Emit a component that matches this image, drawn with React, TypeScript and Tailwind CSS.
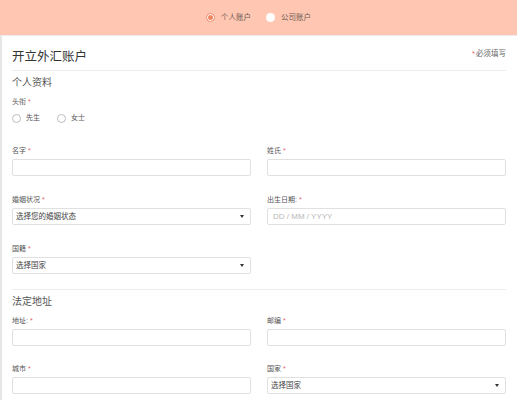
import React from 'react';

interface FieldProps {
  label: string;
  children: React.ReactNode;
}

function Field({ label, children }: FieldProps) {
  return (
    <div>
      <div className="h-[12px] leading-[12px] text-[7px] text-[#555]">
        {label}
        <span className="ml-[2px] text-[#e2646c]">*</span>
      </div>
      <div className="mt-[2px]">{children}</div>
    </div>
  );
}

function TextBox({ placeholder }: { placeholder?: string }) {
  return (
    <div className="h-[17px] rounded-[2px] border border-[#e0e0e0] bg-white px-[5px] flex items-center text-[8px] text-[#b8b8b8]">
      {placeholder}
    </div>
  );
}

function SelectBox({ value }: { value: string }) {
  return (
    <div className="h-[17px] rounded-[2px] border border-[#e0e0e0] bg-white pl-[3px] pr-[6px] flex items-center justify-between text-[7.5px] text-[#444]">
      <span>{value}</span>
      <svg width="4" height="3" viewBox="0 0 4 3">
        <path d="M0 0 L4 0 L2 3 Z" fill="#333" />
      </svg>
    </div>
  );
}

function Radio({ label }: { label: string }) {
  return (
    <div className="flex items-center">
      <span className="w-[9px] h-[9px] rounded-full border border-[#bdbdbd] bg-white" />
      <span className="ml-[5px] text-[7px] text-[#555]">{label}</span>
    </div>
  );
}

export default function App() {
  return (
    <div
      className="w-[517px] h-[400px] overflow-hidden bg-white"
      style={{ fontFamily: '"Liberation Sans", "Noto Sans CJK SC", sans-serif' }}
    >
      {/* Account type switch */}
      <div className="h-[35px] bg-[#ffc7b2] flex items-center justify-center gap-[15px]">
        <label className="flex items-center gap-[6px]">
          <span className="w-[9px] h-[9px] rounded-full border border-[#f08660] bg-white flex items-center justify-center">
            <span className="w-[5px] h-[5px] rounded-full bg-[#f08660]" />
          </span>
          <span className="text-[7.5px] text-[#6e5a54]">个人账户</span>
        </label>
        <label className="flex items-center gap-[6px]">
          <span className="w-[9px] h-[9px] rounded-full bg-white" />
          <span className="text-[7.5px] text-[#6e5a54]">公司账户</span>
        </label>
      </div>

      {/* Form card */}
      <div className="h-[365px] border-t border-[#ececec] border-l-2 border-l-[#e6e6e6] pl-[10px] pr-[11px]">
        <div className="h-[35px] border-b border-[#ececec] flex justify-between">
          <h1 className="mt-[12px] h-[18px] leading-[18px] text-[12.5px] text-[#333]">开立外汇账户</h1>
          <div className="mt-[13px] h-[10px] leading-[10px] text-[7.5px] text-[#666]">
            <span className="text-[#e2646c] mr-[1px]">*</span>必须填写
          </div>
        </div>

        <h2 className="mt-[5px] h-[14px] leading-[14px] text-[10px] text-[#555]">个人资料</h2>

        <div className="mt-[6px] h-[12px] leading-[12px] text-[7px] text-[#555]">
          头衔<span className="ml-[2px] text-[#e2646c]">*</span>
        </div>
        <div className="mt-[4px] h-[12px] flex items-center gap-[17px]">
          <Radio label="先生" />
          <Radio label="女士" />
        </div>

        <div className="mt-[21px] grid grid-cols-2 gap-x-[16px] gap-y-[18px]">
          <Field label="名字">
            <TextBox />
          </Field>
          <Field label="姓氏">
            <TextBox />
          </Field>
          <Field label="婚姻状况">
            <SelectBox value="选择您的婚姻状态" />
          </Field>
          <Field label="出生日期:">
            <TextBox placeholder="DD / MM / YYYY" />
          </Field>
          <Field label="国籍">
            <SelectBox value="选择国家" />
          </Field>
        </div>

        <div className="mt-[15px] border-t border-[#ececec]" />

        <h2 className="mt-[5px] h-[14px] leading-[14px] text-[10px] text-[#555]">法定地址</h2>

        <div className="mt-[6px] grid grid-cols-2 gap-x-[16px] gap-y-[17px]">
          <Field label="地址:">
            <TextBox />
          </Field>
          <Field label="邮编">
            <TextBox />
          </Field>
          <Field label="城市">
            <TextBox />
          </Field>
          <Field label="国家">
            <SelectBox value="选择国家" />
          </Field>
        </div>
      </div>
    </div>
  );
}
